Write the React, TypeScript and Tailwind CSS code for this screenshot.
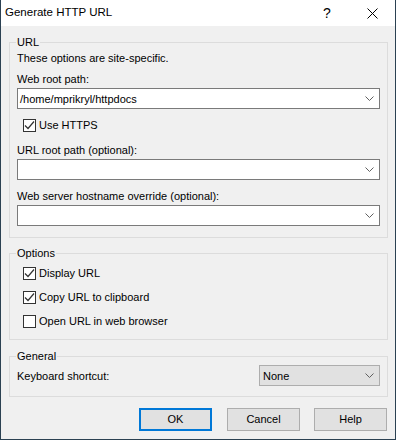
import React from "react";

const font = { fontFamily: '"Liberation Sans", Arial, sans-serif' };

function Chevron() {
  return (
    <svg width="9" height="5" viewBox="0 0 9 5" className="shrink-0">
      <path d="M0.5 0.5 L4.5 4.5 L8.5 0.5" fill="none" stroke="#606060" strokeWidth="1" />
    </svg>
  );
}

function Combo({ value }: { value?: string }) {
  return (
    <div className="mt-[1px] flex h-[21px] items-center justify-between border border-[#7a7a7a] bg-white pl-[2px] pr-[5px]">
      <span className="leading-4">{value}</span>
      <Chevron />
    </div>
  );
}

function Check({ checked, label }: { checked: boolean; label: string }) {
  return (
    <div className="flex h-4 items-center pl-[6px]">
      <div className="flex h-[13px] w-[13px] items-center justify-center border border-[#333333] bg-white">
        {checked && (
          <svg width="11" height="11" viewBox="0 0 11 11">
            <path d="M1 5.5 L4 8.5 L10 1.5" fill="none" stroke="#333333" strokeWidth="1.2" />
          </svg>
        )}
      </div>
      <span className="ml-[3px] leading-4">{label}</span>
    </div>
  );
}

function Group({ title, children, className }: { title: string; children: React.ReactNode; className?: string }) {
  return (
    <fieldset className={"border border-[#dcdcdc] " + (className ?? "")}>
      <legend className="ml-[6px] px-[1px] leading-4">{title}</legend>
      {children}
    </fieldset>
  );
}

function Button({ label, primary }: { label: string; primary?: boolean }) {
  return (
    <div
      className={
        "flex h-[23px] w-[73px] items-center justify-center bg-[#e1e1e1] " +
        (primary ? "border-2 border-[#0078d7]" : "border border-[#adadad]")
      }
    >
      {label}
    </div>
  );
}

export default function App() {
  return (
    <div
      className="flex h-[440px] w-[396px] flex-col border-x border-b border-[#2b4152] bg-[#f0f0f0] text-[11px] text-black"
      style={font}
    >
      {/* title bar */}
      <div className="flex h-[26px] shrink-0 items-center bg-white">
        <span className="ml-[4px] flex-1 text-[11.5px]">Generate HTTP URL</span>
        <div className="flex h-full w-[46px] items-center justify-center text-[14px]">?</div>
        <div className="flex h-full w-[45px] items-center justify-center">
          <svg width="11" height="11" viewBox="0 0 11 11">
            <path d="M0.5 0.5 L10.5 10.5 M10.5 0.5 L0.5 10.5" stroke="#000" strokeWidth="1" />
          </svg>
        </div>
      </div>

      <div className="flex flex-col pl-[8px] pr-[7px]">
        <Group title="URL" className="mt-[8px]">
          <div className="flex flex-col px-[7px] pb-[11px]">
            <div className="h-4 leading-4">These options are site-specific.</div>
            <div className="mt-[5px] h-4 leading-4">Web root path:</div>
            <Combo value="/home/mprikryl/httpdocs" />
            <div className="mt-[8px]">
              <Check checked label="Use HTTPS" />
            </div>
            <div className="mt-[9px] h-4 leading-4">URL root path (optional):</div>
            <Combo />
            <div className="mt-[8px] h-4 leading-4">Web server hostname override (optional):</div>
            <Combo />
          </div>
        </Group>

        <Group title="Options" className="mt-[7px]">
          <div className="flex flex-col px-[7px] pb-[10px] pt-[4px]">
            <Check checked label="Display URL" />
            <div className="mt-[8px]">
              <Check checked label="Copy URL to clipboard" />
            </div>
            <div className="mt-[8px]">
              <Check checked={false} label="Open URL in web browser" />
            </div>
          </div>
        </Group>

        <Group title="General" className="mt-[8px]">
          <div className="flex items-center justify-between pb-[10px] pl-[7px] pr-[7px] pt-[1px]">
            <span className="leading-4">Keyboard shortcut:</span>
            <div className="flex h-[21px] w-[121px] items-center justify-between border border-[#adadad] bg-[#e1e1e1] pl-[3px] pr-[5px]">
              <span className="leading-4">None</span>
              <Chevron />
            </div>
          </div>
        </Group>

        <div className="mt-[11px] flex justify-end pr-[1px]">
          <Button label="OK" primary />
          <div className="ml-[15px]">
            <Button label="Cancel" />
          </div>
          <div className="ml-[14px]">
            <Button label="Help" />
          </div>
        </div>
      </div>
    </div>
  );
}
